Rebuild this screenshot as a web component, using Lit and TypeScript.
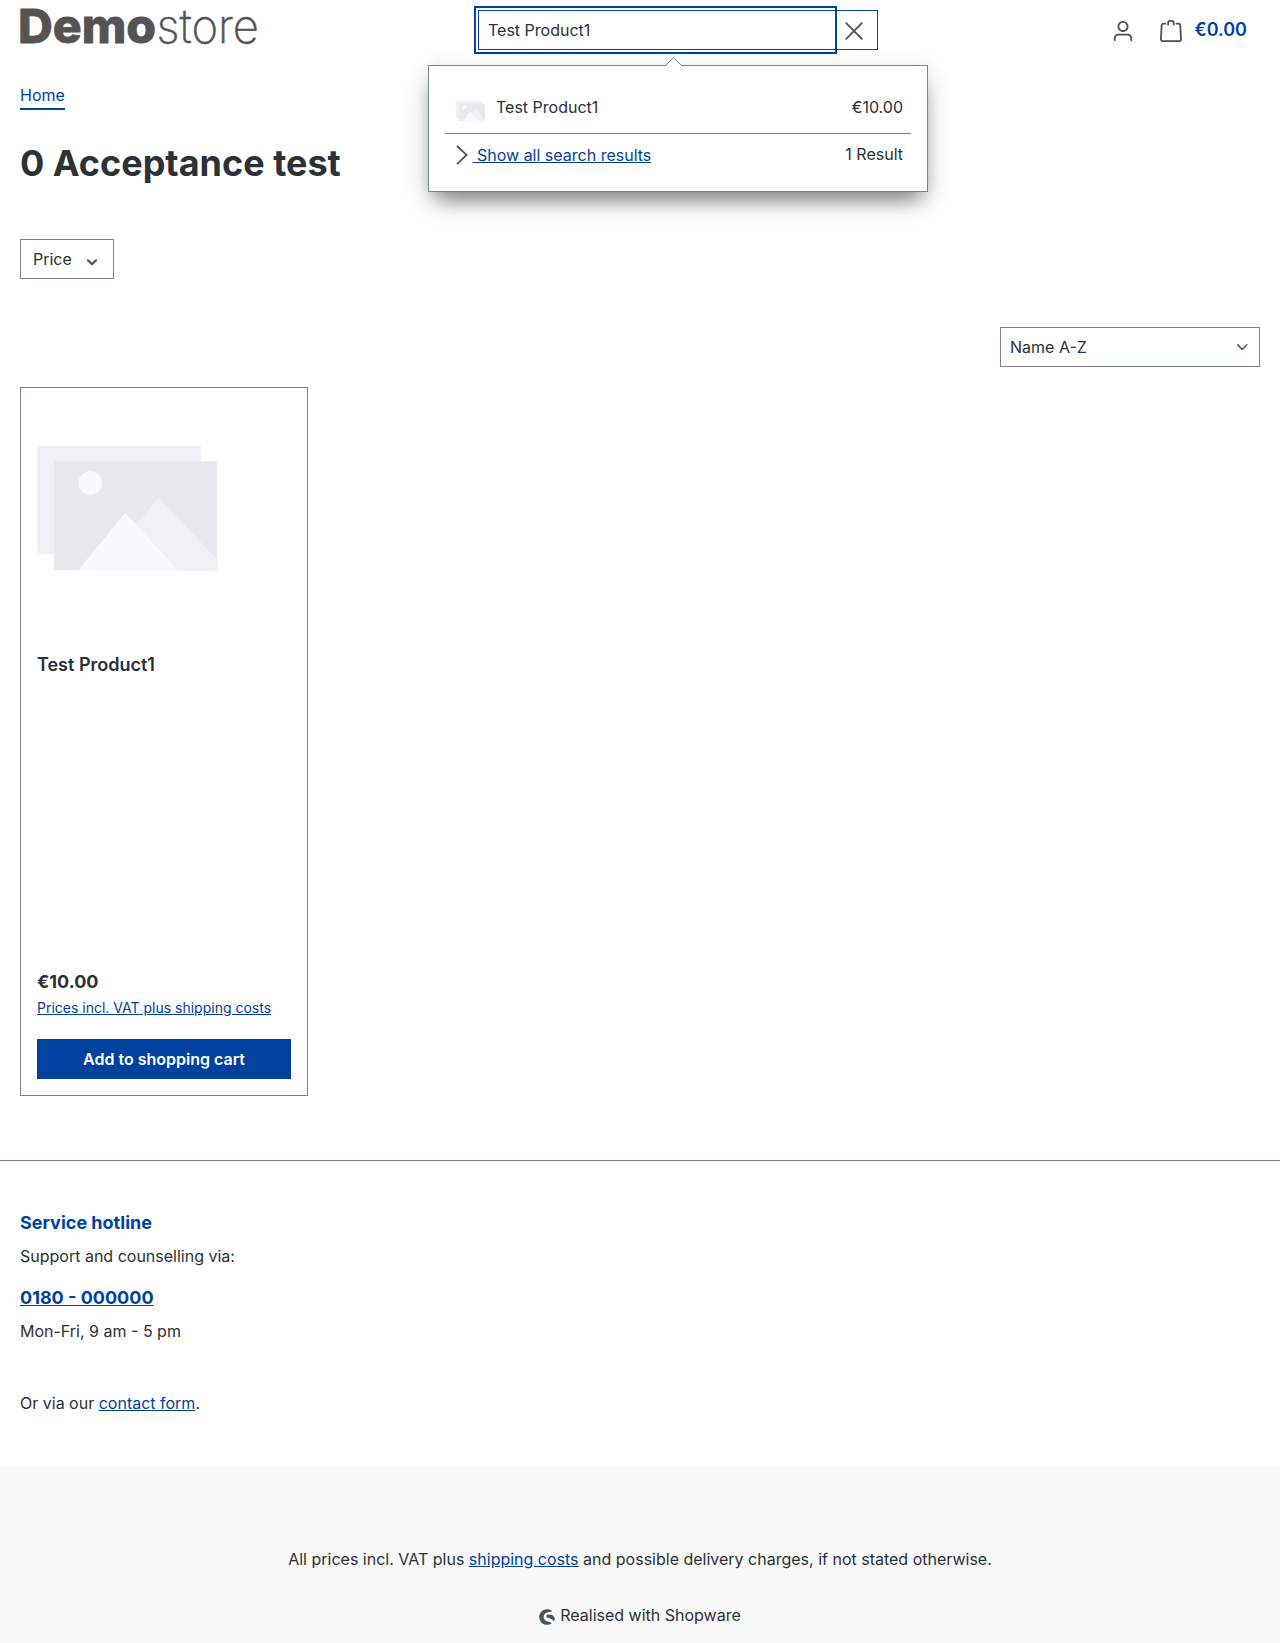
import { LitElement, html, css, svg } from "lit";
import { customElement, property } from "lit/decorators.js";

const icons: Record<string, unknown> = {
  user: svg`<path fill="currentColor" d="M12 3C9.7909 3 8 4.7909 8 7c0 2.2091 1.7909 4 4 4 2.2091 0 4-1.7909 4-4 0-2.2091-1.7909-4-4-4zm0-2c3.3137 0 6 2.6863 6 6s-2.6863 6-6 6-6-2.6863-6-6 2.6863-6 6-6zM4 22.099c0 .5523-.4477 1-1 1s-1-.4477-1-1V20c0-2.7614 2.2386-5 5-5h10.0007c2.7614 0 5 2.2386 5 5v2.099c0 .5523-.4477 1-1 1s-1-.4477-1-1V20c0-1.6569-1.3431-3-3-3H7c-1.6569 0-3 1.3431-3 3v2.099z"/>`,
  bag: svg`<g fill="none" stroke="currentColor" stroke-width="2" stroke-linecap="round"><path d="M5.9 4H3.8a2 2 0 0 0-2 1.9L1 20.9A2 2 0 0 0 3 23h18a2 2 0 0 0 2-2.1L22.1 5.9A2 2 0 0 0 20.1 4H18"/><path d="M8.9 5V3a2 2 0 0 1 2-2h2a2 2 0 0 1 2 2v2"/></g>`,
  close: svg`<path fill="none" stroke="currentColor" stroke-width="2" stroke-linecap="round" d="M3.5 3.5l17 17M20.5 3.5l-17 17"/>`,
  right: svg`<path fill="none" stroke="currentColor" stroke-width="2" d="M6.5 2 17 12 6.5 22"/>`,
  down: svg`<path fill="none" stroke="currentColor" stroke-width="3.6" stroke-linecap="round" stroke-linejoin="round" d="M5 9l7 7 7-7"/>`,
  select: svg`<path fill="none" stroke="currentColor" stroke-width="2.7" stroke-linecap="round" stroke-linejoin="round" d="M3 7l8.500 8.500L20 7"/>`,
  brand: svg`<path fill="currentColor" d="M18.8 2.6C16.8 1 14.5.3 12 .3 5.5.3.3 5.5.3 12S5.5 23.7 12 23.7c2.6 0 5-.9 7-2.4-1.2-1-2.7-1.5-5-2.1-4.7-1.2-7-3.7-7-7.200 0-4.4 4.3-7.8 11.4-7.900.6 0 1-1 .4-1.500zM23.6 13.2C22.2 10 18.5 8.2 14.8 8.2c-2.3 0-3.9 1-3.900 2.600 0 2 2.400 2.600 5.100 3.400 2.800.8 4.700 1.700 6 4 .3.500.6.400.8-.1.800-1.500 1-3.100.8-4.900z"/>`,
};

@customElement("sf-icon")
class SfIcon extends LitElement {
  @property() name = "";
  static styles = css`
    :host { display: block; flex: none; width: 22px; height: 22px; color: #4a545b; }
    .glyph { display: block; width: 100%; height: 100%; overflow: visible; }
  `;
  render() {
    return html`<svg class="glyph" viewBox="0 0 24 24" aria-hidden="true">${icons[this.name]}</svg>`;
  }
}

@customElement("placeholder-image")
class PlaceholderImage extends LitElement {
  static styles = css`
    :host { display: block; flex: none; }
    .image { display: block; width: 100%; }
  `;
  render() {
    return html`<svg class="image" viewBox="0 0 180 126" aria-hidden="true">
      <path fill="#eff0f6" d="M.4.7H163.7V109H.4z" />
      <path fill="#e6e8ec" d="M17 16.5h163V125H17z" />
      <path fill="#eff0f6" d="M121.7 52.7 180 114.3V125.4H59.5z" />
      <path fill="#f8f9fd" d="M88.3 68 141.5 125.4H41z" />
      <circle fill="#f8f9fd" cx="53.3" cy="38" r="11.8" />
    </svg>`;
  }
}

@customElement("search-box")
class SearchBox extends LitElement {
  @property() term = "";
  static styles = css`
    :host { display: block; position: relative; width: 400px; }
    .group { display: flex; height: 40px; }
    .field { box-sizing: border-box; width: 355px; padding: 0 9px; border: 1px solid #0042a0; border-right: 0; border-radius: 0; outline: 2px solid #0042a0; outline-offset: 2px; background: #fff; color: #2b3136; font: inherit; z-index: 1; }
    .clear { box-sizing: border-box; flex: 1; display: flex; align-items: center; justify-content: center; padding: 2px 2px 0 0; border: 1px solid #0042a0; border-left: 0; background: #fff; }
    .popup { box-sizing: border-box; position: absolute; z-index: 2; top: 55px; left: -50px; width: 500px; height: 127px; padding: 29px 16px 0; border: 1px solid #798490; background: #fff; box-shadow: 0 14px 22px -8px rgba(0, 0, 0, .5), 0 6px 22px rgba(0, 0, 0, .14); }
    .caret { position: absolute; top: -9px; left: 236px; width: 17px; height: 10px; }
    .row { display: flex; padding: 0 8px 0 11px; }
    .row.product { height: 38px; border-bottom: 1px solid #798490; }
    .row.all { padding-top: 8px; padding-left: 6px; }
    .thumb { width: 29px; margin: 6px 11px 0 0; }
    .label { flex: 1; }
    .all sf-icon { margin: 2px -0.5px 0 0; }
    .link { color: #0042a0; text-decoration: underline; white-space: pre; position: relative; top: 1px; }
  `;
  render() {
    return html`
      <div class="group">
        <input class="field" type="text" aria-label="Search" .value=${this.term} />
        <button class="clear" aria-label="Clear"><sf-icon name="close"></sf-icon></button>
      </div>
      <div class="popup">
        <svg class="caret" viewBox="0 0 17 10" aria-hidden="true"><path fill="#fff" stroke="#798490" d="M0 9 8.5.7 17 9"/><path fill="#fff" d="M1.5 8.4h14V10h-14z"/></svg>
        <div class="row product">
          <placeholder-image class="thumb"></placeholder-image>
          <span class="label">${this.term}</span><span>€10.00</span>
        </div>
        <div class="row all">
          <sf-icon name="right"></sf-icon>
          <span class="label"><a class="link"> Show all search results</a></span><span>1 Result</span>
        </div>
      </div>`;
  }
}

@customElement("product-card")
class ProductCard extends LitElement {
  @property() name = "";
  @property() price = "";
  static styles = css`
    :host { box-sizing: border-box; display: flex; flex-direction: column; width: 288px; height: 709px; padding: 16px; border: 1px solid #798490; }
    .picture { display: flex; align-items: center; height: 208px; }
    .picture placeholder-image { width: 180px; }
    .name { margin-top: 41px; font-size: 18px; font-weight: 600; flex: 1; }
    .price { font-size: 18px; line-height: 27px; font-weight: 700; }
    .tax { margin-top: 2px; font-size: 14px; line-height: 21px; color: #0042a0; text-decoration: underline; }
    .buy { height: 40px; margin-top: 21px; border: 0; padding: 0; background: #0042a0; color: #fff; font: 600 16px/24px Inter, sans-serif; }
  `;
  render() {
    return html`
      <div class="picture"><placeholder-image></placeholder-image></div>
      <div class="name">${this.name}</div>
      <div class="price">${this.price}</div>
      <a class="tax">Prices incl. VAT plus shipping costs</a>
      <button class="buy">Add to shopping cart</button>`;
  }
}

@customElement("app-root")
class AppRoot extends LitElement {
  static styles = css`
    :host { display: flex; flex-direction: column; height: 1643px; font: 400 16px/24px Inter, sans-serif; color: #2b3136; background: #fff; }
    * { box-sizing: border-box; }
    a { color: #0042a0; text-decoration: underline; }
    h1, h2, p { margin: 0; }
    .header { display: grid; grid-template-columns: 458px 400px 1fr; align-items: start; height: 60px; padding: 0 33px 0 20px; }
    .logo { display: block; width: 240px; height: 60px; overflow: visible; }
    .demo { font: 800 47px Inter, sans-serif; fill: #545454; stroke: #545454; stroke-width: .8px; }
    .store { font: 250 47px Inter, sans-serif; fill: #545454; stroke: #545454; stroke-width: .5px; }
    .search { margin-top: 10px; }
    .actions { display: flex; justify-content: flex-end; align-items: center; height: 60px; padding-top: 2px; }
    .actions .user { margin-right: 26px; }
    .total { margin-left: 12px; margin-top: -3px; color: #0042a0; font-size: 18px; font-weight: 600; }
    .main { display: flex; flex-direction: column; align-items: flex-start; padding: 23px 20px 0; height: 1100px; }
    .crumb { height: 27px; border-bottom: 2px solid #0042a0; text-decoration: none; }
    .title { margin-top: 32px; font-size: 36px; line-height: 43px; font-weight: 700; }
    .filter { display: flex; align-items: center; gap: 13px; width: 94px; height: 40px; margin-top: 54px; padding: 0 0 0 12px; border: 1px solid #798490; }
    .filter sf-icon { width: 14px; height: 14px; margin-top: 5px; }
    .sort { display: flex; align-self: flex-end; align-items: center; justify-content: space-between; width: 260px; height: 40px; margin-top: 48px; padding: 0 10px 0 9px; border: 1px solid #798490; }
    .sort sf-icon { width: 13px; height: 13px; }
    .card { margin-top: 20px; }
    .footer { height: 307px; padding: 48px 20px 0; border-top: 1px solid #798490; }
    .heading { color: #0042a0; font-size: 18px; line-height: 27px; font-weight: 700; }
    .support { margin-top: 8px; }
    .phone { display: block; margin-top: 16px; font-size: 18px; line-height: 27px; font-weight: 700; }
    .hours { margin-top: 8px; }
    .contact { margin-top: 48px; }
    .bottom { flex: 1; display: flex; flex-direction: column; align-items: center; padding-top: 80px; background: #f9f9f9; }
    .brand { display: flex; gap: 5px; margin-top: 32px; }
    .brand sf-icon { width: 16px; height: 16px; margin-top: 6px; }
  `;
  render() {
    return html`
      <header class="header">
        <svg class="logo" viewBox="0 0 240 60" role="img">
          <text class="demo" x="-2" y="42.5" textLength="138" lengthAdjust="spacingAndGlyphs">Demo</text>
          <text class="store" x="136.500" y="42.5" textLength="102.500" lengthAdjust="spacingAndGlyphs">store</text>
        </svg>
        <search-box class="search" term="Test Product1"></search-box>
        <div class="actions">
          <sf-icon class="user" name="user"></sf-icon>
          <sf-icon name="bag"></sf-icon>
          <span class="total">€0.00</span>
        </div>
      </header>
      <main class="main">
        <a class="crumb">Home</a>
        <h1 class="title">0 Acceptance test</h1>
        <div class="filter">Price<sf-icon name="down"></sf-icon></div>
        <div class="sort">Name A-Z<sf-icon name="select"></sf-icon></div>
        <product-card class="card" name="Test Product1" price="€10.00"></product-card>
      </main>
      <footer class="footer">
        <h2 class="heading">Service hotline</h2>
        <p class="support">Support and counselling via:</p>
        <a class="phone">0180 - 000000</a>
        <p class="hours">Mon-Fri, 9 am - 5 pm</p>
        <p class="contact">Or via our <a>contact form</a>.</p>
      </footer>
      <div class="bottom">
        <p>All prices incl. VAT plus <a>shipping costs</a> and possible delivery charges, if not stated otherwise.</p>
        <div class="brand"><sf-icon name="brand"></sf-icon>Realised with Shopware</div>
      </div>`;
  }
}
